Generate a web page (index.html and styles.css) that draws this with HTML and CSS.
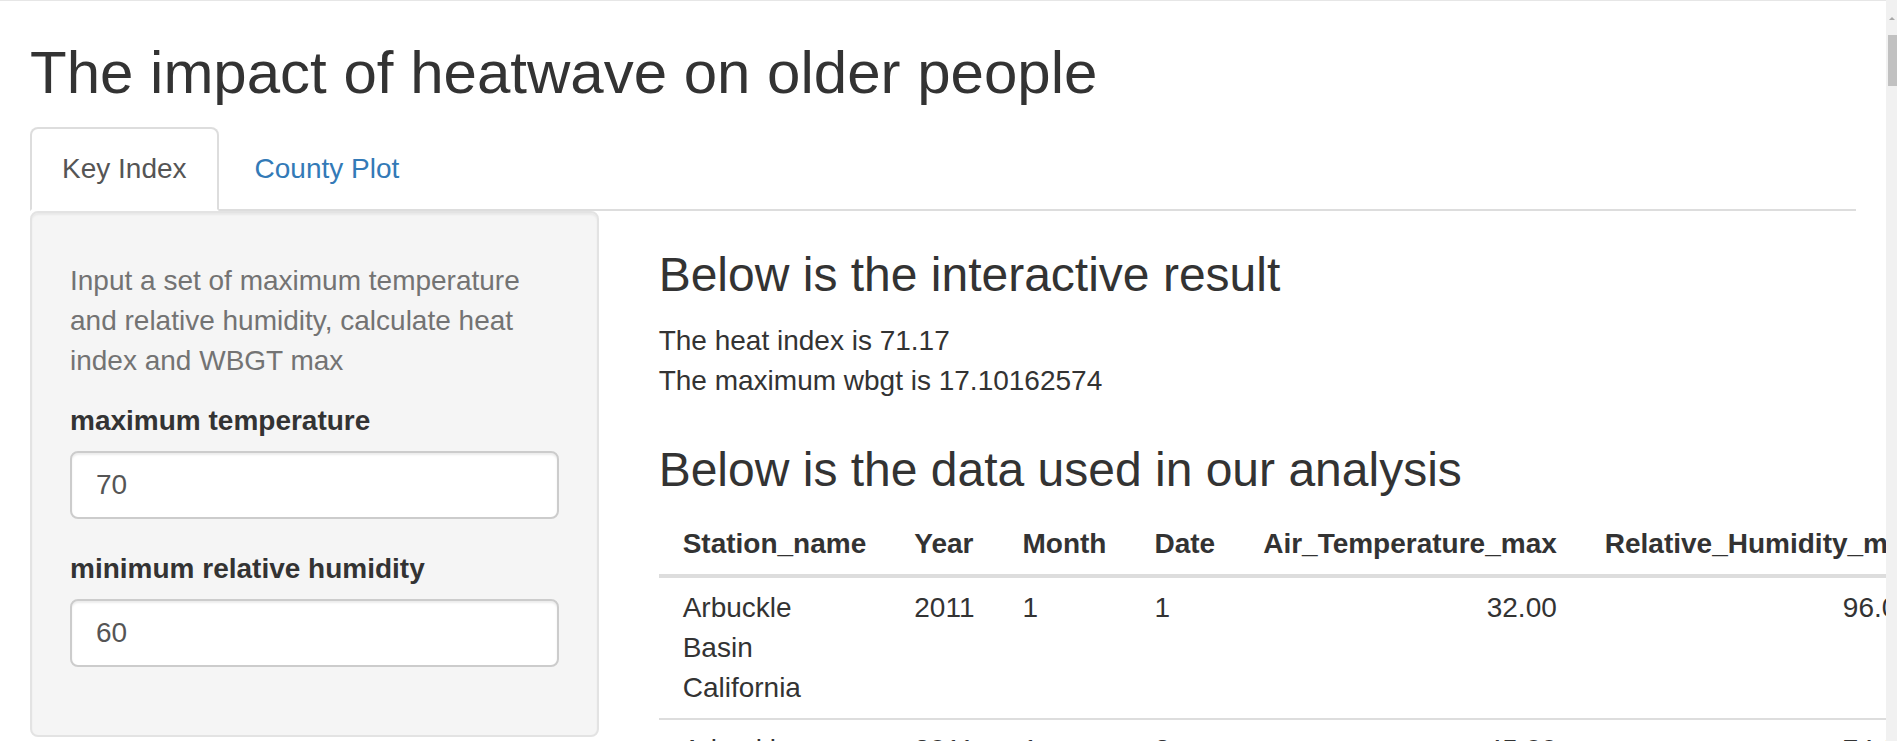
FILE: index.html
```html
<!DOCTYPE html>
<html lang="en">
<head>
<meta charset="utf-8">
<title>The impact of heatwave on older people</title>
<link rel="stylesheet" href="styles.css">
</head>
<body>
<div class="page">
  <div class="container">
    <h2 class="title">The impact of heatwave on older people</h2>
    <div class="tabbable">
      <ul class="nav-tabs">
        <li class="active"><a>Key Index</a></li>
        <li><a class="link">County Plot</a></li>
      </ul>
      <div class="tab-content">
        <div class="row">
          <div class="col-side">
            <form class="well">
              <span class="help-block">Input a set of maximum temperature and relative humidity, calculate heat index and WBGT max</span>
              <div class="form-group">
                <label class="control-label">maximum temperature</label>
                <input class="form-control" type="text" value="70">
              </div>
              <div class="form-group">
                <label class="control-label">minimum relative humidity</label>
                <input class="form-control" type="text" value="60">
              </div>
            </form>
          </div>
          <div class="col-main">
            <h3 class="subhead subhead-first">Below is the interactive result</h3>
            <div class="result">The heat index is 71.17</div>
            <div class="result">The maximum wbgt is 17.10162574</div>
            <h3 class="subhead subhead-data">Below is the data used in our analysis</h3>
            <table class="data-table">
              <thead>
                <tr>
                  <th>Station_name</th>
                  <th>Year</th>
                  <th>Month</th>
                  <th>Date</th>
                  <th class="num">Air_Temperature_max</th>
                  <th class="num">Relative_Humidity_min</th>
                </tr>
              </thead>
              <tbody>
                <tr>
                  <td>Arbuckle Basin California</td>
                  <td>2011</td>
                  <td>1</td>
                  <td>1</td>
                  <td class="num">32.00</td>
                  <td class="num">96.00</td>
                </tr>
                <tr>
                  <td>Arbuckle Basin California</td>
                  <td>2011</td>
                  <td>1</td>
                  <td>2</td>
                  <td class="num">45.00</td>
                  <td class="num">74.00</td>
                </tr>
              </tbody>
            </table>
          </div>
        </div>
      </div>
    </div>
  </div>
</div>
<div class="scrollbar">
  <div class="sb-arrow"></div>
  <div class="sb-thumb"></div>
</div>
</body>
</html>
```

FILE: styles.css
```css
html, body {
  margin: 0;
  height: 100%;
  overflow: hidden;
}

body {
  display: flex;
  font-family: "Liberation Sans", Arial, sans-serif;
  font-size: 28px;
  line-height: 40px;
  color: #333;
  background: #fff;
}

* {
  box-sizing: border-box;
}

.page {
  flex: 1;
  min-width: 0;
  overflow: hidden;
  box-shadow: inset 0 1px 0 #e6e6e6;
}

.container {
  padding: 0 30px;
}

.title {
  font-size: 60px;
  font-weight: 400;
  line-height: 1.1;
  margin: 40px 0 20px;
}

.tabbable {
  padding-top: 1px;
}

.nav-tabs {
  list-style: none;
  margin: 0;
  padding: 0;
  display: flex;
  border-bottom: 2px solid #ddd;
}

.nav-tabs li {
  margin-bottom: -2px;
  margin-right: 4px;
}

.nav-tabs a {
  display: block;
  padding: 20px 30px;
  line-height: 40px;
  border: 2px solid transparent;
  border-radius: 8px 8px 0 0;
  color: #337ab7;
}

.nav-tabs li.active a {
  color: #555;
  background: #fff;
  border-color: #ddd;
  border-bottom-color: transparent;
}

.row {
  display: flex;
  margin: 0 -30px;
}

.col-side {
  width: 33.33333%;
  flex: none;
  padding: 0 30px;
}

.col-main {
  width: 66.66667%;
  flex: none;
  padding: 0 30px;
  min-width: 0;
}

.well {
  margin: 0 0 40px;
  padding: 38px;
  background: #f5f5f5;
  border: 2px solid #e3e3e3;
  border-radius: 8px;
  box-shadow: inset 0 2px 2px rgba(0, 0, 0, 0.05);
}

.help-block {
  display: block;
  margin: 10px 0 20px;
  color: #737373;
}

.form-group {
  margin-bottom: 30px;
}

.control-label {
  display: inline-block;
  margin-bottom: 10px;
  font-weight: 700;
}

.form-control {
  display: block;
  width: 100%;
  height: 68px;
  padding: 12px 24px;
  font-family: inherit;
  font-size: 28px;
  line-height: 40px;
  color: #555;
  background: #fff;
  border: 2px solid #ccc;
  border-radius: 8px;
  box-shadow: inset 0 2px 2px rgba(0, 0, 0, 0.075);
  outline: none;
}

.subhead {
  font-size: 48px;
  font-weight: 400;
  line-height: 1.1;
  margin: 40px 0 17px;
}

.subhead-first {
  margin: 38px 0 19px;
}

.subhead-data {
  margin: 43px 0 17px;
}

.data-table {
  width: 100%;
  border-collapse: collapse;
  border-spacing: 0;
  margin-bottom: 40px;
}

.data-table th,
.data-table td {
  padding: 10px 24px;
  line-height: 40px;
  text-align: left;
}

.data-table th {
  vertical-align: bottom;
  font-weight: 700;
  border-bottom: 4px solid #ddd;
}

.data-table td {
  vertical-align: top;
  border-top: 2px solid #ddd;
}

.data-table .num {
  text-align: right;
}

.scrollbar {
  width: 11px;
  flex: none;
  background: #f1f1f1;
  display: flex;
  flex-direction: column;
  align-items: flex-end;
}

.sb-arrow {
  margin-top: 17px;
  margin-right: 2px;
  width: 0;
  height: 0;
  border-left: 3px solid transparent;
  border-right: 3px solid transparent;
  border-bottom: 3px solid #a8a8a8;
}

.sb-thumb {
  margin-top: 15px;
  width: 9px;
  height: 51px;
  background: #c1c1c1;
}
```
